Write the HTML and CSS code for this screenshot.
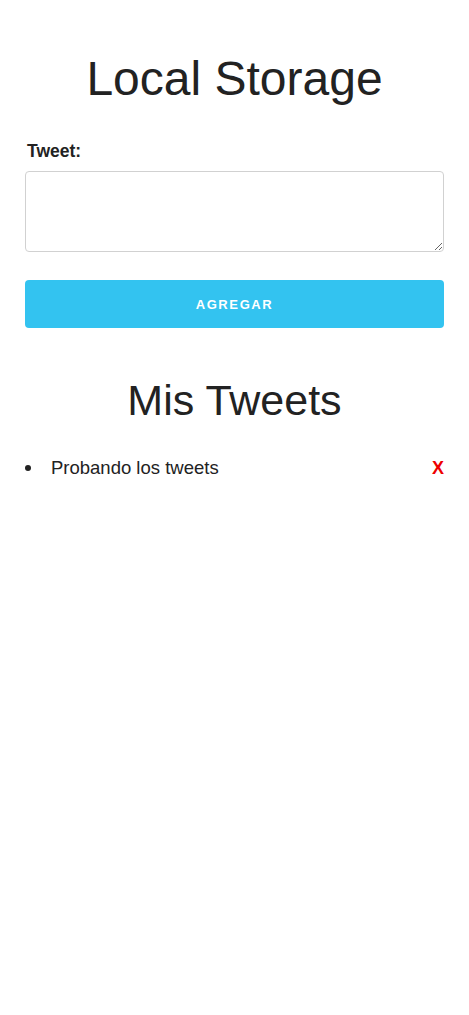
FILE: index.html
```html
<!DOCTYPE html>
<html lang="es">
<head>
<meta charset="utf-8">
<title>Local Storage</title>
<link rel="stylesheet" href="styles.css">
</head>
<body>
<div class="container">
  <h1 class="title">Local Storage</h1>
  <form class="form">
    <label class="label" for="tweet">Tweet:</label>
    <textarea class="textarea" id="tweet"></textarea>
    <button class="button" type="button">Agregar</button>
  </form>
  <h2 class="subtitle">Mis Tweets</h2>
  <ul class="list">
    <li class="item"><span class="text">Probando los tweets</span><a class="delete">X</a></li>
  </ul>
</div>
</body>
</html>
```
FILE: styles.css
```css
html, body {
  margin: 0;
  padding: 0;
  background: #fff;
}
body {
  font-family: "Liberation Sans", Arial, sans-serif;
  color: #222;
}
.container {
  padding: 0 25px;
}
.title {
  margin: 49px 0 0;
  font-size: 48px;
  line-height: 60px;
  font-weight: 400;
  text-align: center;
}
.form {
  display: flex;
  flex-direction: column;
}
.label {
  margin-top: 32px;
  font-size: 17.5px;
  line-height: 20px;
  font-weight: 700;
  padding-left: 2px;
}
.textarea {
  margin-top: 10px;
  height: 81px;
  box-sizing: border-box;
  border: 1px solid #d1d1d1;
  border-radius: 4px;
  background: #fff;
  padding: 6px 10px;
  font-family: inherit;
}
.button {
  margin-top: 28px;
  height: 48px;
  border: none;
  border-radius: 4px;
  background: #33c3f0;
  color: #fff;
  font-family: inherit;
  font-size: 13px;
  font-weight: 700;
  letter-spacing: 1.6px;
  text-transform: uppercase;
}
.subtitle {
  margin: 46px 0 0;
  font-size: 43px;
  line-height: 52px;
  font-weight: 400;
  text-align: center;
}
.list {
  margin: 30px 0 0;
  padding: 0;
  list-style: none;
}
.item {
  display: flex;
  align-items: center;
  font-size: 18.5px;
  line-height: 24px;
}
.item::before {
  content: "";
  flex: none;
  width: 6px;
  height: 6px;
  border-radius: 50%;
  background: #222;
  margin-right: 20px;
}
.text {
  flex: 1;
}
.delete {
  color: #e00;
  font-weight: 700;
  font-size: 18px;
}
```
